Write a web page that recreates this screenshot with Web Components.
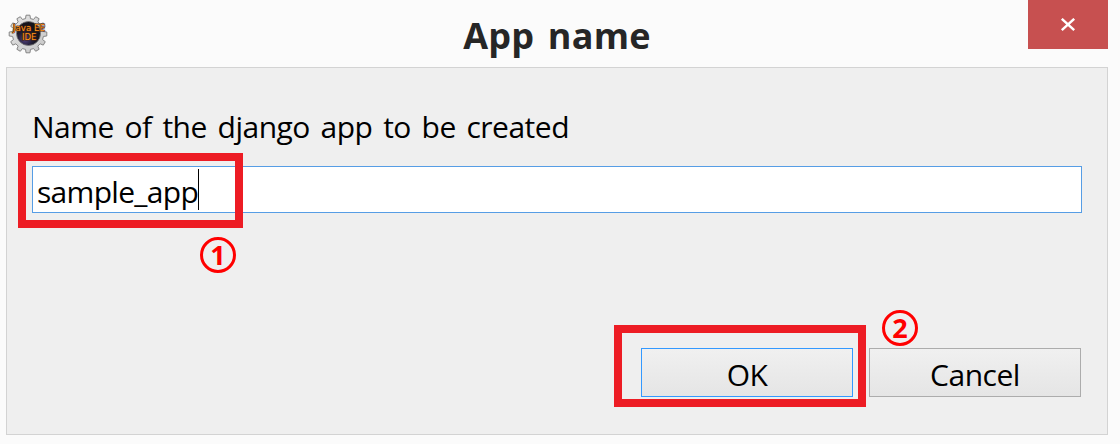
<!DOCTYPE html>
<html lang="en">
<head>
<meta charset="utf-8">
<title>App name</title>
<style>
html,body{margin:0;height:100%;background:#fbfbfb;overflow:hidden}
body{font-family:"Open Sans","Noto Sans",sans-serif;color:#000}
</style>
</head>
<body>
<app-dialog></app-dialog>
<script>
const define=(name,html)=>{
  const t=document.createElement('template');
  t.innerHTML=html;
  customElements.define(name,class extends HTMLElement{
    constructor(){super();this.attachShadow({mode:'open'}).append(t.content.cloneNode(true));}
  });
};

const gear=(n=12)=>{
  const pts=[];
  for(let i=0;i<n;i++){
    for(const [off,r] of [[-.3,15.6],[-.2,18.9],[.2,18.9],[.3,15.6]]){
      const a=(i+off)/n*Math.PI*2;
      pts.push((20+Math.sin(a)*r).toFixed(2)+','+(20-Math.cos(a)*r).toFixed(2));
    }
  }
  return pts.join(' ');
};

define('ide-icon',`
<style>:host{display:block;width:40px;height:40px}svg{display:block}
text{font:400 9px "DejaVu Sans",sans-serif;fill:#ff9420;stroke:#4a2408;stroke-width:1.2px;paint-order:stroke}</style>
<svg width="40" height="40" viewBox="0 0 40 40">
  <defs>
    <linearGradient id="m" x1="0" y1="0" x2="1" y2="1"><stop offset="0" stop-color="#e6e6e6"/><stop offset="1" stop-color="#c6c6c6"/></linearGradient>
    <radialGradient id="d" cx=".35" cy=".75"><stop offset="0" stop-color="#50407c"/><stop offset=".6" stop-color="#242037"/><stop offset="1" stop-color="#15141c"/></radialGradient>
  </defs>
  <polygon points="${gear()}" fill="url(#m)" stroke="#858585" stroke-width="1" stroke-linejoin="round"/>
  <circle cx="20.5" cy="19.5" r="12" fill="url(#d)" stroke="#777" stroke-width=".8"/>
  <text x="5" y="17.4" textLength="32" lengthAdjust="spacingAndGlyphs">Java EE</text>
  <text x="14" y="26.2" textLength="14.5" lengthAdjust="spacingAndGlyphs">IDE</text>
</svg>`);

define('close-button',`
<style>:host{display:flex;width:80px;height:49px;background:#c75050;align-items:center;justify-content:center}
svg{display:block}</style>
<svg width="16" height="14" viewBox="0 0 16 14"><path d="M1.8 .8 14.2 12.2M14.2 .8 1.8 12.2" stroke="#fff" stroke-width="2.4"/></svg>`);

define('title-bar',`
<style>:host{display:grid;grid-template-columns:80px 1fr 80px;height:67px}
ide-icon{margin:14px 0 0 8px}
h1{margin:9px 0 0 6px;text-align:center;font-size:36px;line-height:54px;font-weight:700;color:#262626;white-space:nowrap;letter-spacing:.2px;word-spacing:4px}</style>
<ide-icon></ide-icon><h1><slot></slot></h1><close-button></close-button>`);

define('text-field',`
<style>:host{display:flex;box-sizing:border-box;height:47px;border:1px solid #569de5;background:#fff;padding:2px 0 0 4px}
span{font-size:30px;line-height:46px;white-space:nowrap;letter-spacing:-.7px}
i{width:1px;height:41px;background:#000}</style>
<span><slot></slot></span><i></i>`);

define('push-button',`
<style>:host{display:block;box-sizing:border-box;width:212px;height:49px;border:1px solid var(--edge,#acacac);background:linear-gradient(#f0f0f0,#e5e5e5);text-align:center;font-size:30px;line-height:51px;letter-spacing:-.5px}</style>
<slot></slot>`);

define('mark-box',`
<style>:host{position:absolute;box-sizing:border-box;border:8px solid #ed1c24}</style>`);

define('step-badge',`
<style>:host{position:absolute;box-sizing:border-box;width:36px;height:36px;border:3px solid #f00;border-radius:50%;color:#f00;font:700 27px/29px "Open Sans",sans-serif;text-align:center}</style>
<slot></slot>`);

define('app-dialog',`
<style>
:host{display:block;position:relative;width:1108px;height:444px}
main{box-sizing:border-box;margin-left:6px;height:368px;border:1px solid #d3d3d3;background:#efefef;padding:36px 25px 0}
label{display:block;height:62px;font-size:30px;line-height:46px;white-space:nowrap;letter-spacing:-.5px;word-spacing:3.4px}
footer{display:flex;justify-content:flex-end;gap:16px;margin:135px 1px 0 0}
.ok{--edge:#3399ff}
.m1{left:18px;top:153px;width:225px;height:75px}
.m2{left:614px;top:325px;width:252px;height:82px}
.s1{left:200px;top:237px}
.s2{left:882px;top:310px}
</style>
<title-bar>App name</title-bar>
<main>
  <label>Name of the django app to be created</label>
  <text-field>sample_app</text-field>
  <footer><push-button class="ok">OK</push-button><push-button>Cancel</push-button></footer>
</main>
<mark-box class="m1"></mark-box><mark-box class="m2"></mark-box>
<step-badge class="s1">1</step-badge><step-badge class="s2">2</step-badge>`);
</script>
</body>
</html>
